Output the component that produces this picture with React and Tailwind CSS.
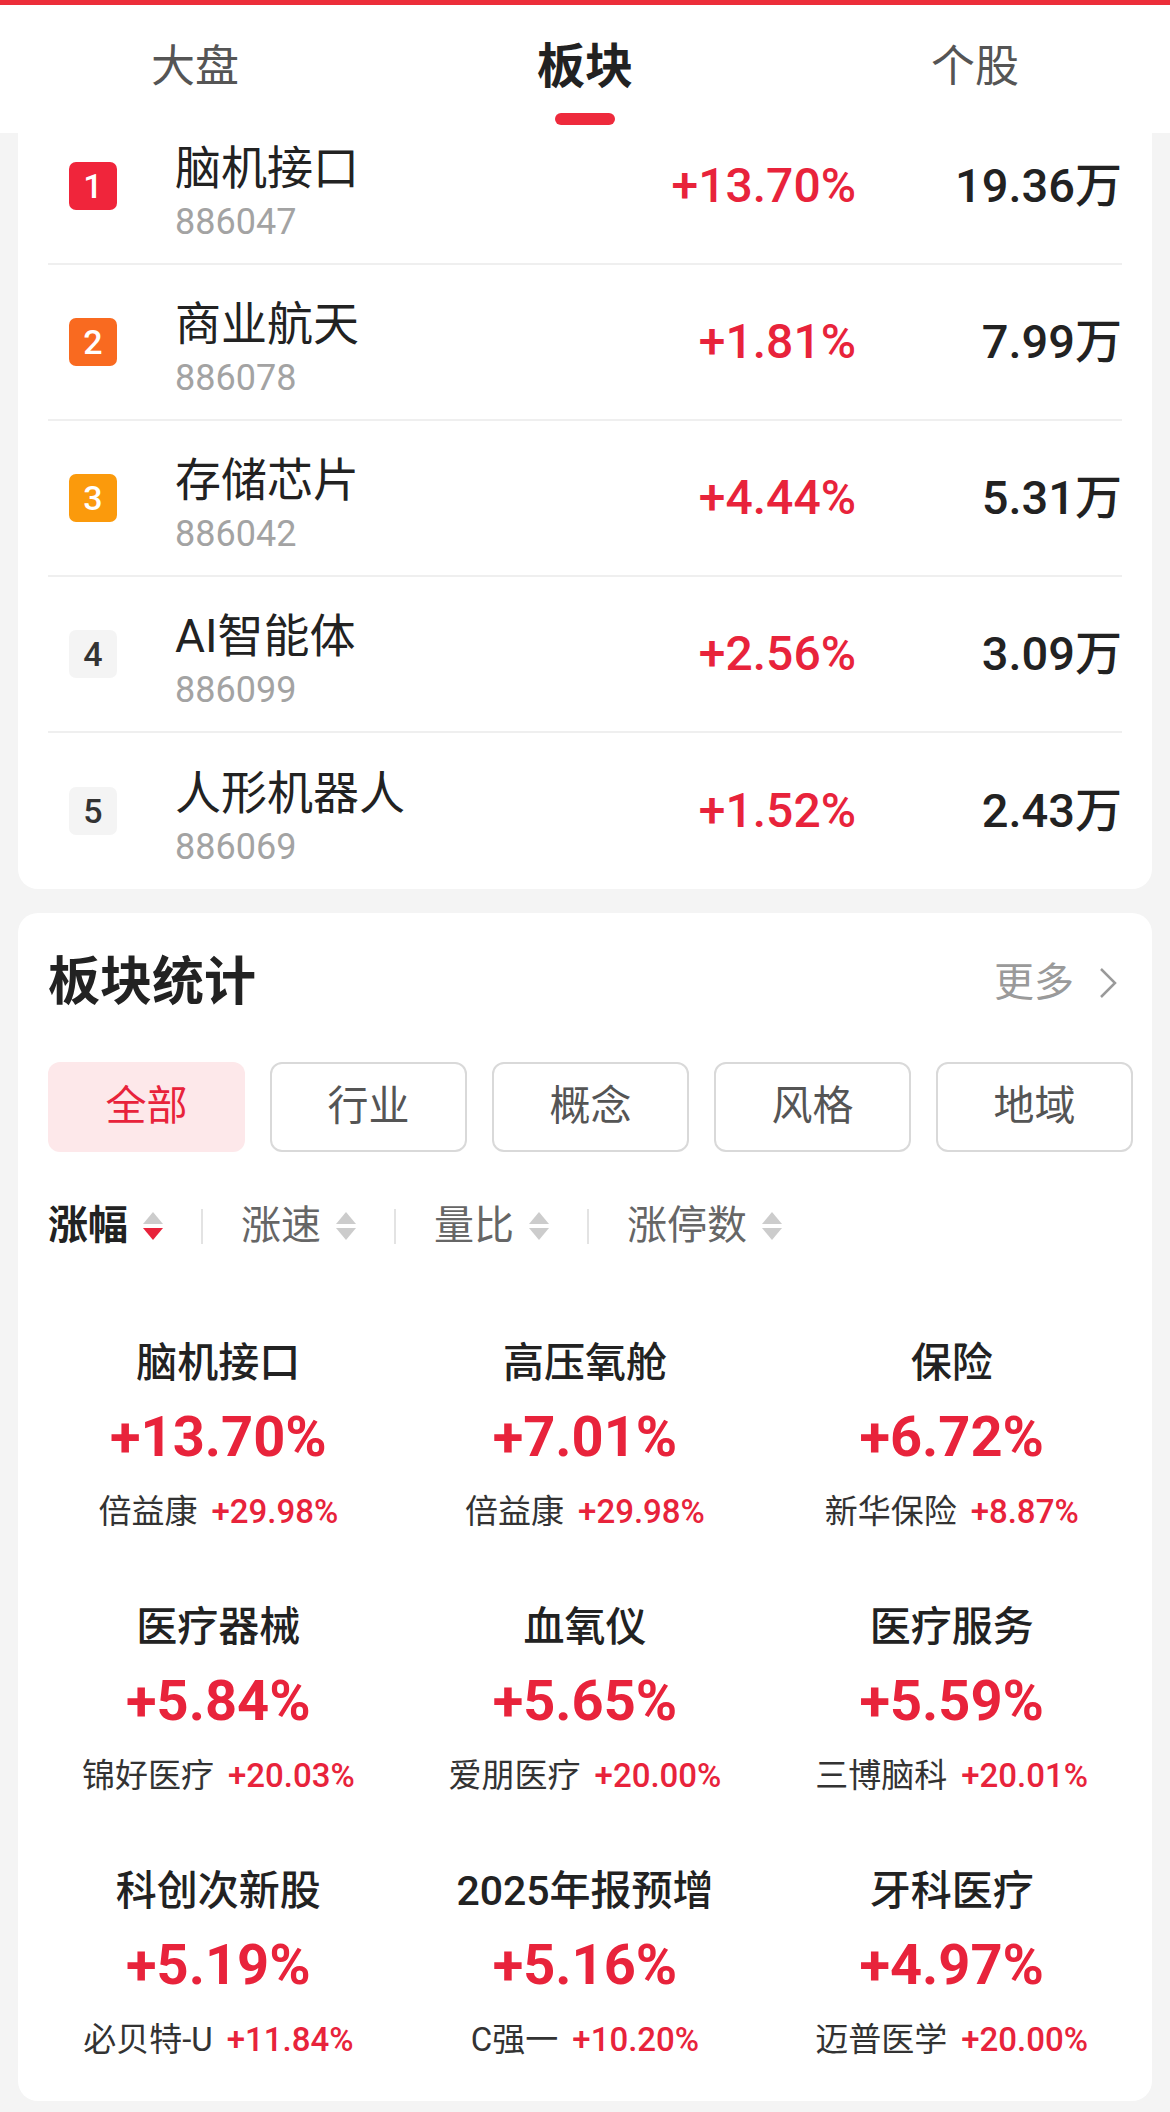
import React from "react";

const topList = [
  { rank: 1, name: "脑机接口", code: "886047", pct: "+13.70%", amount: "19.36万" },
  { rank: 2, name: "商业航天", code: "886078", pct: "+1.81%", amount: "7.99万" },
  { rank: 3, name: "存储芯片", code: "886042", pct: "+4.44%", amount: "5.31万" },
  { rank: 4, name: "AI智能体", code: "886099", pct: "+2.56%", amount: "3.09万" },
  { rank: 5, name: "人形机器人", code: "886069", pct: "+1.52%", amount: "2.43万" },
];

const rankColors = {
  1: "bg-[#f0253b] text-white",
  2: "bg-[#f96a20] text-white",
  3: "bg-[#fb9a0c] text-white",
  4: "bg-[#f4f4f4] text-[#333]",
  5: "bg-[#f4f4f4] text-[#333]",
};

const filters = ["全部", "行业", "概念", "风格", "地域"];

const sorts = [
  { label: "涨幅", active: true },
  { label: "涨速" },
  { label: "量比" },
  { label: "涨停数" },
];

const stats = [
  { name: "脑机接口", pct: "+13.70%", stock: "倍益康", stockPct: "+29.98%" },
  { name: "高压氧舱", pct: "+7.01%", stock: "倍益康", stockPct: "+29.98%" },
  { name: "保险", pct: "+6.72%", stock: "新华保险", stockPct: "+8.87%" },
  { name: "医疗器械", pct: "+5.84%", stock: "锦好医疗", stockPct: "+20.03%" },
  { name: "血氧仪", pct: "+5.65%", stock: "爱朋医疗", stockPct: "+20.00%" },
  { name: "医疗服务", pct: "+5.59%", stock: "三博脑科", stockPct: "+20.01%" },
  { name: "科创次新股", pct: "+5.19%", stock: "必贝特-U", stockPct: "+11.84%" },
  { name: "2025年报预增", pct: "+5.16%", stock: "C强一", stockPct: "+10.20%" },
  { name: "牙科医疗", pct: "+4.97%", stock: "迈普医学", stockPct: "+20.00%" },
];

function SortArrows({ active }) {
  return (
    <svg width="20" height="28" viewBox="0 0 20 28" className="ml-[15px]">
      <polygon points="10,0 20,12 0,12" fill="#cccccc" />
      <polygon points="0,16 20,16 10,28" fill={active ? "#e8233b" : "#cccccc"} />
    </svg>
  );
}

export default function App() {
  return (
    <div className="w-[1170px] min-h-screen bg-[#f4f4f4] pb-[10px] font-[Roboto,'Noto_Sans_CJK_SC',sans-serif]">
      {/* top red strip */}
      <div className="h-[5px] bg-[#ec2e3a]" />

      {/* tabs */}
      <header className="h-[128px] bg-white grid grid-cols-3">
        {["大盘", "板块", "个股"].map((t) => {
          const active = t === "板块";
          return (
            <div key={t} className="flex flex-col items-center pt-[36px]">
              <span
                className={
                  active
                    ? "text-[48px] leading-[52px] font-bold text-[#222]"
                    : "text-[44px] leading-[52px] text-[#555]"
                }
              >
                {t}
              </span>
              {active && <span className="mt-[20px] h-[12px] w-[60px] rounded-full bg-[#ee2a3c]" />}
            </div>
          );
        })}
      </header>

      {/* ranking list */}
      <section className="mx-[18px] bg-white rounded-b-[20px] overflow-hidden px-[30px]">
        {topList.map((r, i) => (
          <div
            key={r.code}
            className={
              "h-[156px] flex items-center " +
              (i === 0 ? "-mt-[24px] " : "") +
              (i < topList.length - 1 ? "border-b-2 border-[#efefef]" : "")
            }
          >
            <div
              className={
                "ml-[21px] w-[48px] h-[48px] rounded-[7px] flex items-center justify-center text-[34px] font-medium " +
                rankColors[r.rank]
              }
            >
              {r.rank}
            </div>
            <div className="ml-[58px] flex-1 flex flex-col mt-[12px]">
              <span className="text-[46px] leading-[50px] text-[#222]">{r.name}</span>
              <span className="mt-[9px] text-[36px] leading-[40px] text-[#a3a3a3]">{r.code}</span>
            </div>
            <div className="text-[48px] leading-[56px] font-medium text-[#e8233b] text-right">{r.pct}</div>
            <div className="w-[266px] text-[47px] leading-[56px] font-medium text-[#222] text-right">{r.amount}</div>
          </div>
        ))}
      </section>

      {/* sector statistics */}
      <section className="mt-[24px] mx-[18px] bg-white rounded-[20px] pt-[40px] pb-[41px]">
        <div className="px-[30px] h-[60px] flex items-center justify-between">
          <h2 className="text-[52px] leading-[60px] font-bold text-[#222]">板块统计</h2>
          <div className="flex items-center text-[40px] text-[#9a9a9a] pr-[5px]">
            <span>更多</span>
            <svg width="18" height="32" viewBox="0 0 18 32" className="ml-[25px]">
              <polyline points="2,2 16,16 2,30" fill="none" stroke="#9a9a9a" strokeWidth="2.5" />
            </svg>
          </div>
        </div>

        <div className="mt-[49px] px-[30px] flex gap-[25px]">
          {filters.map((f, i) => (
            <div
              key={f}
              className={
                "w-[197px] h-[90px] shrink-0 rounded-[12px] flex items-center justify-center text-[41px] " +
                (i === 0
                  ? "bg-[#fde8ea] text-[#e8233b]"
                  : "border-2 border-[#d9d9d9] text-[#555]")
              }
            >
              {f}
            </div>
          ))}
        </div>

        <div className="mt-[49px] px-[30px] h-[50px] flex items-center">
          {sorts.map((s, i) => (
            <React.Fragment key={s.label}>
              {i > 0 && <span className="mx-[38px] w-[2px] h-[35px] bg-[#e3e3e3]" />}
              <span
                className={
                  "text-[40px] leading-[50px] " +
                  (s.active ? "font-bold text-[#222]" : "text-[#666]")
                }
              >
                {s.label}
              </span>
              <SortArrows active={s.active} />
            </React.Fragment>
          ))}
        </div>

        <div className="mt-[87px] px-[17px] grid grid-cols-3 gap-y-[70px]">
          {stats.map((s) => (
            <div key={s.name} className="flex flex-col items-center">
              <span className="text-[41px] leading-[50px] font-medium text-[#222]">{s.name}</span>
              <span className="mt-[17px] text-[56px] leading-[64px] font-bold text-[#e8233b]">{s.pct}</span>
              <div className="mt-[23px] flex gap-[14px] text-[33px] leading-[40px]">
                <span className="text-[#333]">{s.stock}</span>
                <span className="font-medium text-[#e8233b]">{s.stockPct}</span>
              </div>
            </div>
          ))}
        </div>
      </section>
    </div>
  );
}
